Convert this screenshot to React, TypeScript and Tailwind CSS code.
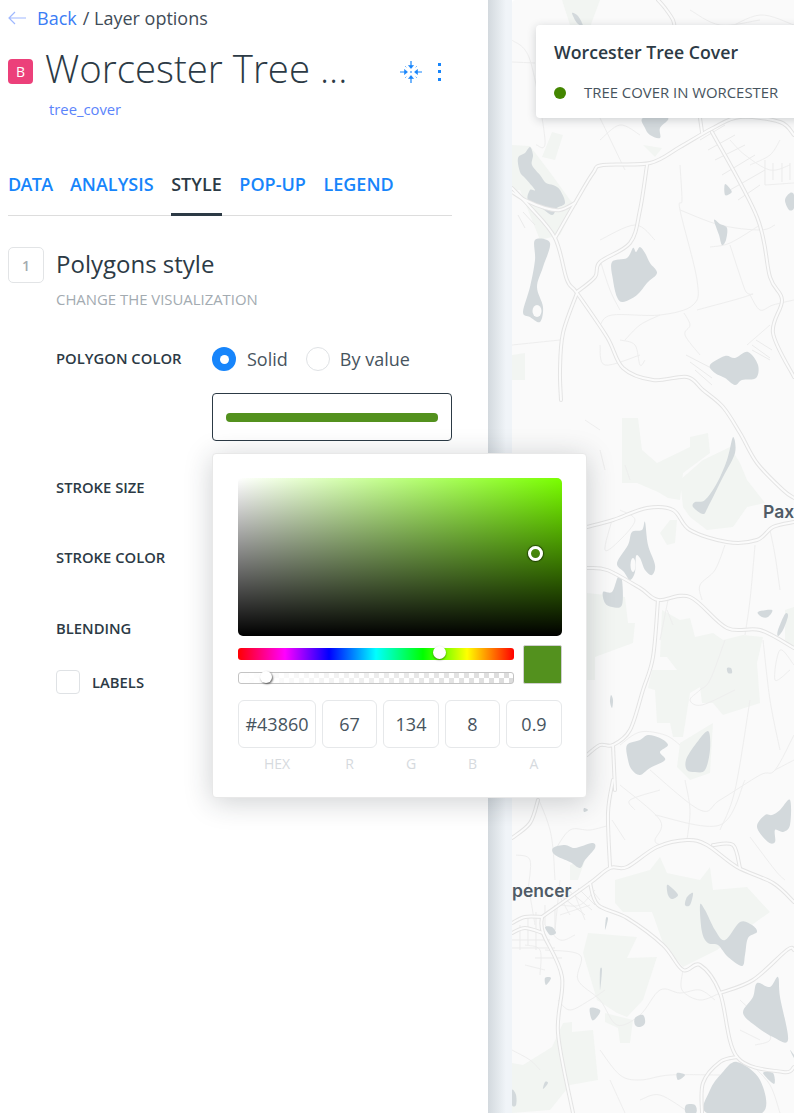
import React from "react";

type P = [number, number];

function smooth(pts: P[], closed = false): string {
  const n = pts.length;
  const at = (i: number): P => (closed ? pts[(i + n) % n] : pts[Math.max(0, Math.min(n - 1, i))]);
  let d = `M${pts[0][0]},${pts[0][1]}`;
  const last = closed ? n : n - 1;
  for (let i = 0; i < last; i++) {
    const p0 = at(i - 1), p1 = at(i), p2 = at(i + 1), p3 = at(i + 2);
    const c1x = p1[0] + (p2[0] - p0[0]) / 6, c1y = p1[1] + (p2[1] - p0[1]) / 6;
    const c2x = p2[0] - (p3[0] - p1[0]) / 6, c2y = p2[1] - (p3[1] - p1[1]) / 6;
    d += `C${c1x.toFixed(1)},${c1y.toFixed(1)} ${c2x.toFixed(1)},${c2y.toFixed(1)} ${p2[0]},${p2[1]}`;
  }
  return closed ? d + "Z" : d;
}

const poly = (pts: P[]) => "M" + pts.map((p) => p.join(",")).join("L") + "Z";

const parks: P[][] = [
  [[562,0],[600,0],[590,27],[570,25]],
  [[552,132],[563,135],[555,160],[542,157]],
  [[512,145],[530,146],[552,175],[570,200],[575,205],[560,235],[540,240],[520,190],[512,190]],
  [[512,355],[525,353],[525,380],[512,380]],
  [[643,145],[662,148],[655,157]],
  [[622,418],[638,418],[642,450],[657,463],[690,447],[690,437],[708,433],[710,453],[683,473],[680,500],[668,498],[658,492],[637,483],[622,483]],
  [[680,480],[703,460],[730,447],[740,463],[747,480],[765,503],[747,507],[733,527],[707,530],[690,517],[683,507]],
  [[660,533],[670,520],[677,520],[675,543],[667,545]],
  [[587,593],[625,597],[628,623],[635,623],[633,643],[595,657],[595,680],[587,680]],
  [[662,610],[680,620],[690,618],[695,637],[713,633],[723,640],[743,635],[763,637],[757,663],[760,703],[723,715],[713,703],[702,703],[700,687],[690,693],[683,737],[673,737],[670,723],[657,723],[655,690],[648,688],[652,670],[677,670],[667,657],[660,657]],
  [[785,610],[794,607],[794,650],[785,640]],
  [[680,743],[713,723],[710,773],[690,780],[677,767]],
  [[615,880],[650,870],[660,857],[667,873],[700,880],[710,867],[713,890],[747,887],[770,912],[717,950],[683,967],[663,943],[652,912],[623,912],[615,903]],
  [[588,933],[637,937],[627,958],[657,957],[643,1000],[627,1017],[617,1013],[597,1000],[583,953]],
  [[605,1013],[633,1020],[630,1043],[620,1043],[618,1028],[605,1022]],
  [[512,1063],[523,1065],[552,1047],[563,1023],[572,1022],[572,1032],[593,1030],[598,1080],[570,1085],[550,1110],[512,1113]],
  [[570,865],[585,860],[578,880],[570,880]],
];

const lakes: P[][] = [
  [[572,13],[578,16],[583,26],[577,23]],
  [[643,118],[668,118],[660,128],[660,138],[650,135],[645,128]],
  [[612,262],[627,258],[633,248],[636,252],[640,247],[645,253],[650,263],[657,273],[647,283],[637,295],[623,302],[617,297],[613,280]],
  [[535,240],[550,243],[543,267],[537,287],[543,307],[540,322],[530,317],[523,312],[530,287],[535,260]],
  [[518,158],[525,153],[530,147],[533,155],[532,165],[540,175],[546,183],[553,185],[560,190],[565,203],[557,208],[552,215],[540,207],[528,200],[530,190],[535,190],[525,178],[520,172]],
  [[710,365],[725,356],[735,358],[748,352],[758,365],[756,378],[742,380],[735,385],[725,378],[715,373]],
  [[725,184],[731,190],[731,193],[725,195]],
  [[714,220],[720,224],[727,228],[726,240],[722,245],[719,235]],
  [[785,200],[790,193],[794,195],[794,208],[789,210]],
  [[733,437],[735,453],[723,477],[708,507],[703,514],[693,507],[695,502],[705,500],[717,483],[727,460]],
  [[617,563],[628,545],[632,532],[642,530],[645,522],[648,545],[655,565],[652,575],[645,570],[640,558],[636,556],[635,572],[630,580],[624,572]],
  [[603,592],[612,592],[618,577],[622,580],[622,605],[612,607],[605,603]],
  [[627,745],[640,740],[648,735],[660,738],[668,745],[660,752],[665,760],[650,768],[640,775],[632,770],[628,760]],
  [[686,760],[695,745],[708,731],[710,750],[705,770],[695,772],[687,770]],
  [[758,612],[772,610],[768,617],[762,617]],
  [[785,614],[788,616],[783,630],[778,636],[778,630]],
  [[727,668],[731,668],[732,673],[728,673]],
  [[611,695],[613,700],[612,708],[610,702]],
  [[553,848],[565,845],[575,848],[592,843],[595,848],[585,860],[580,868],[570,862],[555,855]],
  [[757,827],[765,815],[772,815],[780,810],[790,800],[790,825],[783,832],[775,830],[775,842],[768,842]],
  [[700,905],[705,910],[715,930],[725,940],[740,922],[752,925],[757,932],[748,938],[745,955],[742,966],[728,957],[718,945],[708,943],[702,932]],
  [[667,885],[672,888],[678,895],[672,899],[668,895]],
  [[687,897],[693,893],[690,905],[685,905]],
  [[778,977],[780,997],[788,1040],[773,1037],[757,1027],[743,1013],[753,997],[757,983],[770,987]],
  [[737,1062],[760,1080],[762,1113],[707,1113],[710,1090],[722,1073]],
  [[590,1008],[600,1010],[597,1017],[592,1020]],
  [[635,1018],[643,1015],[645,1023],[640,1027],[635,1025]],
  [[545,1082],[548,1083],[543,1089]],
  [[600,970],[602,970],[600,990]],
  [[545,978],[551,978],[546,985]],
  [[606,918],[608,919],[605,930]],
  [[545,927],[552,927],[556,933],[550,935]],
  [[763,1073],[773,1073],[774,1084]],
  [[677,1073],[685,1075],[678,1080]],
  [[512,1090],[516,1095],[516,1105],[512,1105]],
  [[790,1050],[794,1055],[794,1058]],
  [[686,1105],[695,1105],[696,1113],[686,1113]],
  [[584,808],[588,810],[584,812]],
];

const roads: P[][] = [
  [[658,0],[665,8],[673,20],[675,30]],
  [[700,118],[702,132]],
  [[794,135],[780,122],[740,117],[713,128],[680,147],[650,163],[603,165],[593,173],[575,203],[555,238]],
  [[647,165],[640,210],[630,243],[600,262],[595,277],[577,292]],
  [[512,188],[530,207],[555,238],[567,280],[577,293],[607,337],[623,368],[653,380],[687,377],[703,390],[723,407],[740,433],[757,463],[783,490],[794,498]],
  [[512,192],[525,200],[545,208],[560,210],[575,203]],
  [[577,293],[563,333],[560,370],[561,400]],
  [[712,132],[757,217],[770,277],[782,300],[773,333],[794,377]],
  [[587,527],[613,520],[647,508],[673,510],[690,530],[727,542],[757,540],[773,527],[794,522]],
  [[587,568],[607,570],[640,588],[658,600],[690,597],[727,628],[760,630],[794,648]],
  [[658,600],[653,657],[643,690],[630,730],[613,745],[600,745],[587,755]],
  [[613,745],[615,790]],
  [[613,780],[608,813],[610,867]],
  [[542,917],[590,883],[610,868],[627,867],[657,847],[687,840],[707,845],[737,867],[773,883],[794,902]],
  [[713,845],[733,845],[740,868]],
  [[590,883],[598,905],[627,918],[663,945],[683,970],[700,965],[720,993],[737,1057],[783,1072],[794,1067]],
  [[720,993],[753,980],[787,950],[794,950]],
  [[542,917],[543,933],[562,977],[558,1033],[573,1113]],
  [[737,1057],[720,1062],[703,1083],[702,1113]],
  [[538,800],[530,823],[512,838]],
  [[512,923],[525,917],[542,917]],
  [[512,933],[525,928],[543,933]],
];

const minor: P[][] = [
  [[512,40],[530,60],[545,140],[536,145]],
  [[512,62],[535,63]],
  [[600,140],[620,125],[640,135]],
  [[600,118],[625,170]],
  [[680,165],[682,200],[680,210],[697,280],[693,305],[660,315],[612,315],[600,325]],
  [[680,210],[720,225],[760,230],[775,225]],
  [[710,247],[730,243],[760,225]],
  [[730,245],[745,290],[750,295],[697,310]],
  [[750,295],[760,310],[773,305],[794,300]],
  [[684,313],[690,325],[685,335],[700,355]],
  [[660,315],[640,325],[625,340]],
  [[620,340],[635,345],[640,365],[645,360]],
  [[600,345],[605,365],[640,355]],
  [[600,240],[635,225],[655,240]],
  [[512,345],[560,340]],
  [[600,260],[610,290],[620,310]],
  [[747,345],[770,325]],
  [[725,30],[760,15],[794,25]],
  [[690,10],[720,25],[760,20]],
  [[730,140],[745,155],[770,170],[790,165]],
  [[750,165],[770,155],[780,140]],
  [[765,185],[794,183]],
  [[585,420],[600,430]],
  [[600,450],[605,470]],
  [[625,465],[630,480]],
  [[620,510],[635,520],[620,540],[605,550],[612,520]],
  [[725,545],[715,570],[700,585],[702,600]],
  [[755,545],[750,600],[745,635]],
  [[770,530],[775,555],[780,590]],
  [[790,670],[775,680],[780,650],[794,665]],
  [[725,640],[710,680],[700,690],[690,700],[702,705],[735,690]],
  [[763,640],[770,700],[780,750]],
  [[794,735],[775,770],[760,775],[720,800],[700,810],[650,770]],
  [[794,760],[775,770]],
  [[620,745],[640,732],[665,735],[680,745]],
  [[660,640],[668,600]],
  [[667,610],[673,625]],
  [[750,700],[735,790],[720,830]],
  [[620,785],[660,820],[655,840],[660,845]],
  [[655,815],[720,825],[745,780]],
  [[660,790],[630,800],[635,810]],
  [[685,780],[690,810],[687,840]],
  [[750,837],[775,870],[785,880]],
  [[530,780],[550,830],[555,880]],
  [[610,825],[590,830],[570,830],[555,850]],
  [[612,820],[625,840]],
  [[560,880],[555,930]],
  [[590,888],[600,900]],
  [[560,905],[580,905],[595,890]],
  [[560,915],[590,905]],
  [[575,895],[585,920]],
  [[560,897],[570,915]],
  [[545,950],[580,955],[578,980],[600,1000],[617,1025],[640,1015],[660,990],[680,993],[700,990],[715,1000]],
  [[683,970],[682,990],[700,1000],[720,993]],
  [[740,1000],[765,1025],[770,1040],[755,1045]],
  [[740,1030],[760,1040]],
  [[605,990],[590,1000],[570,1010],[558,1000]],
  [[600,1050],[620,1075],[640,1080],[670,1075],[720,1075]],
  [[610,1080],[625,1113]],
  [[512,1050],[530,1060],[540,1070]],
  [[640,1100],[660,1095],[690,1113]],
  [[752,1065],[770,1085],[780,1113]],
  [[545,925],[560,940],[575,935]],
  [[525,945],[540,950],[540,975]],
  [[525,965],[545,970]],
  [[530,895],[535,925]],
  [[516,855],[530,860],[528,890]],
];

const streets = [
  "M520,925V950M528,915V945M536,912V950M512,940H550M512,948H555M535,958H562M545,905V925M555,905V930M560,895L585,915M568,890L592,910M578,888L595,905",
  "M700,140L725,125M708,150L735,135M715,160L745,145M722,175L755,155M730,190L765,170M738,200L760,185",
  "M765,160V185M773,163V180M782,163V182M790,163V180",
  "M686,355L715,370M690,362L712,378M695,370L712,385M752,345L770,358M756,340L772,350M752,350L770,360",
  "M518,215L525,228M523,212L535,225",
];

function MapArt() {
  return (
    <svg viewBox="512 0 282 1113" width="282" height="1113" className="block blur-[0.4px]">
      <rect x="512" y="0" width="282" height="1113" fill="#fafafa" />
      {parks.map((p, i) => <path key={i} d={poly(p)} fill="#f2f5f2" />)}
      {minor.map((p, i) => <path key={i} d={smooth(p)} fill="none" stroke="#eeeeee" strokeWidth="1" />)}
      {streets.map((d, i) => <path key={i} d={d} fill="none" stroke="#ebebeb" strokeWidth="1" />)}
      {lakes.map((p, i) => <path key={i} d={smooth(p, true)} fill="#d3d9dc" />)}
      <ellipse cx="633" cy="565" rx="2.5" ry="7" fill="#fafafa" />
      <ellipse cx="537" cy="311" rx="4.5" ry="6" fill="#fafafa" />
      {roads.map((p, i) => <path key={i} d={smooth(p)} fill="none" stroke="#e4e4e4" strokeWidth="4" strokeLinecap="round" strokeLinejoin="round" />)}
      {roads.map((p, i) => <path key={i} d={smooth(p)} fill="none" stroke="#fbfbfb" strokeWidth="2" strokeLinecap="round" strokeLinejoin="round" />)}
    </svg>
  );
}

const Label = ({ children, className = "" }: { children: React.ReactNode; className?: string }) => (
  <div className={`text-[14.8px] font-semibold leading-[20px] text-[#2c3a45] ${className}`}>{children}</div>
);

function CompressIcon() {
  return (
    <svg width="24" height="24" viewBox="0 0 24 24" fill="none" stroke="#1785fb" strokeWidth="1.2">
      <path d="M12 1V8M1 12H8M12 23V16M23 12H16" />
      <path d="M9.5 5.5L12 8.5L14.5 5.5Z M5.5 9.5L8.5 12L5.5 14.5Z M9.5 18.5L12 15.5L14.5 18.5Z M18.5 9.5L15.5 12L18.5 14.5Z" fill="#1785fb" strokeWidth="0.6" />
      <circle cx="12" cy="12" r="1" fill="#1785fb" stroke="none" opacity="0.7" />
      <path d="M6 6l1.4 1.4M18 6l-1.4 1.4M6 18l1.4-1.4M18 18l-1.4-1.4" strokeWidth="1" opacity="0.55" />
    </svg>
  );
}

function NumInput({ value, cap, w }: { value: string; cap: string; w: string }) {
  return (
    <div className={`flex flex-col items-center ${w}`}>
      <div className="flex h-[48px] w-full items-center justify-center rounded-[6px] border border-[#e6e8ea] text-[18px] text-[#47545e]">{value}</div>
      <div className="mt-[6px] text-[14px] leading-[20px] text-[#d6dade]">{cap}</div>
    </div>
  );
}

function Picker() {
  return (
    <div className="absolute left-[212px] top-[453px] z-10 h-[345px] w-[375px] rounded-[4px] border border-[#e8e8e8] bg-white pl-[25px] pr-[24px] pt-[24px] shadow-[0_4px_28px_rgba(30,40,50,0.22)]">
      <div className="relative h-[158px] w-[324px] rounded-[5px] bg-[linear-gradient(to_top,#000,transparent),linear-gradient(to_right,#fff,#7aff00)]">
        <div className="absolute left-[290px] top-[68px] h-[15px] w-[15px] rounded-full border-[3px] border-white shadow-[0_0_1px_1px_rgba(0,0,0,0.5)]" />
      </div>
      <div className="mt-[9px] flex justify-between">
        <div className="flex w-[276px] flex-col gap-[12px] pt-[3px]">
          <div className="relative h-[12px] rounded-[3px] bg-[linear-gradient(to_right,#f00,#f0f_17%,#00f_33%,#0ff_50%,#0f0_67%,#ff0_83%,#f00)]">
            <div className="absolute left-[195px] top-[-2px] h-[13px] w-[13px] rounded-full bg-white shadow-[0_1px_2px_rgba(0,0,0,0.45)]" />
          </div>
          <div className="relative h-[12px] rounded-[3px] border border-[#c4c4c4] bg-[linear-gradient(to_right,#fff,transparent),conic-gradient(#dcdcdc_25%,#fff_0_50%,#dcdcdc_0_75%,#fff_0)] bg-[length:100%_100%,10px_10px]">
            <div className="absolute left-[21px] top-[-2px] h-[12px] w-[12px] rounded-full bg-white shadow-[1px_1px_2px_rgba(0,0,0,0.6)]" />
          </div>
        </div>
        <div className="h-[39px] w-[39px] rounded-[2px] border border-[#cfcfcf] bg-[#53911e]" />
      </div>
      <div className="mt-[16px] flex justify-between">
        <NumInput value="#43860" cap="HEX" w="w-[78px]" />
        <NumInput value="67" cap="R" w="w-[55px]" />
        <NumInput value="134" cap="G" w="w-[56px]" />
        <NumInput value="8" cap="B" w="w-[55px]" />
        <NumInput value="0.9" cap="A" w="w-[56px]" />
      </div>
    </div>
  );
}

export default function App() {
  return (
    <div className="relative flex h-[1113px] w-[794px] overflow-hidden bg-white font-['Open_Sans',sans-serif] text-[#2c3a45]">
      <aside className="w-[488px] shrink-0 bg-white pl-[8px] pr-[36px]">
        <div className="flex h-[38px] items-center pb-[2px] text-[18px] leading-[24px]">
          <svg width="18" height="14" viewBox="0 0 18 14" fill="none" stroke="#9fb8ff" strokeWidth="1.2" className="mr-[11px]">
            <path d="M18 7H1M7 1L1 7L7 13" />
          </svg>
          <span className="text-[#3b7df5]">Back</span>
          <span className="ml-[6px] text-[#3f4c57]">/ Layer options</span>
        </div>
        <div className="mt-[7px] flex h-[46px] items-center">
          <div className="mt-[7px] flex h-[25px] w-[25px] items-center justify-center rounded-[4px] bg-[#ec407a] text-[14px] text-white">B</div>
          <div className="ml-[12px] whitespace-nowrap text-[38.4px] font-light leading-[46px] text-[#2c3a45]">Worcester Tree ...</div>
          <div className="flex-1" />
          <div className="mr-[1px] mt-[7px] flex items-center">
            <CompressIcon />
            <div className="ml-[15px] mr-[10px] flex flex-col gap-[4.5px]">
              <span className="h-[3px] w-[3px] bg-[#1785fb]" />
              <span className="h-[3px] w-[3px] bg-[#1785fb]" />
              <span className="h-[3px] w-[3px] bg-[#1785fb]" />
            </div>
          </div>
        </div>
        <div className="mt-[8px] pl-[41px] text-[14.8px] leading-[20px] text-[#5b84fb]">tree_cover</div>
        <div className="mt-[41px] flex h-[56px] gap-[17.6px] border-b border-[#dddddd] text-[18px] font-semibold leading-[24px]">
          <div className="pt-[12px] tracking-[-0.7px] text-[#1785fb]">DATA</div>
          <div className="pt-[12px] text-[#1785fb]">ANALYSIS</div>
          <div className="h-[56px] border-b-[3px] border-[#2c3a45] pt-[12px] text-[#2c3a45]">STYLE</div>
          <div className="pt-[12px] text-[#1785fb]">POP-UP</div>
          <div className="pt-[12px] text-[#1785fb]">LEGEND</div>
        </div>
        <div className="mt-[31px] flex">
          <div className="flex h-[36px] w-[36px] items-center justify-center rounded-[5px] border border-[#e2e4e6] text-[14px] font-semibold text-[#a4abb0]">1</div>
          <div className="ml-[12px]">
            <div className="mt-[1px] text-[24px] leading-[32px] text-[#2c3a45]">Polygons style</div>
            <div className="mt-[9px] text-[14.9px] leading-[20px] text-[#a3abb1]">CHANGE THE VISUALIZATION</div>
          </div>
        </div>
        <div className="mt-[38px] pl-[48px]">
          <div className="flex h-[24px] items-center">
            <Label className="mt-[-3px] w-[156px]">POLYGON COLOR</Label>
            <span className="flex h-[24px] w-[24px] items-center justify-center rounded-full bg-[#1785fb]">
              <span className="h-[9px] w-[9px] rounded-full bg-white" />
            </span>
            <span className="ml-[11px] text-[18px] text-[#47545e]">Solid</span>
            <span className="ml-[18px] h-[24px] w-[24px] rounded-full border border-[#dfe2e5]" />
            <span className="ml-[10px] text-[18px] text-[#47545e]">By value</span>
          </div>
          <div className="ml-[156px] mt-[22px] flex h-[48px] w-[240px] items-center rounded-[4px] border border-[#2c3a45] px-[13px]">
            <div className="h-[9px] w-[213px] rounded-[4px] bg-[#53911e]" />
          </div>
          <Label className="mt-[36px]">STROKE SIZE</Label>
          <Label className="mt-[50px]">STROKE COLOR</Label>
          <Label className="mt-[51px]">BLENDING</Label>
          <div className="mt-[32px] flex items-center">
            <span className="h-[24px] w-[24px] rounded-[4px] border border-[#dfe2e5]" />
            <Label className="ml-[12px]">LABELS</Label>
          </div>
        </div>
      </aside>
      <div className="w-[24px] shrink-0 bg-[linear-gradient(to_right,#d3d9de,#e6ebef_50%,#f0f4f8_75%)]" />
      <main className="relative w-[282px] shrink-0 overflow-hidden rounded-tl-[4px]">
        <MapArt />
        <span className="absolute left-[251px] top-[500px] font-['Inter',sans-serif] text-[17.5px] font-semibold leading-[24px] text-[#4f5b66]">Pax</span>
        <span className="absolute left-0 top-[879px] font-['Inter',sans-serif] text-[17.5px] font-semibold leading-[24px] text-[#4f5b66]">pencer</span>
        <div className="absolute left-[24px] top-[25px] h-[93px] w-[280px] rounded-[4px] bg-white pl-[18px] pt-[15px] shadow-[0_2px_10px_rgba(30,40,50,0.2)]">
          <div className="whitespace-nowrap text-[17.7px] font-semibold leading-[24px] text-[#2c3a45]">Worcester Tree Cover</div>
          <div className="mt-[18px] flex items-center">
            <span className="mt-[2px] h-[12px] w-[12px] rounded-full bg-[#438600]" />
            <span className="ml-[18px] whitespace-nowrap text-[14.9px] leading-[20px] text-[#47545e]">TREE COVER IN WORCESTER</span>
          </div>
        </div>
      </main>
      <Picker />
    </div>
  );
}
